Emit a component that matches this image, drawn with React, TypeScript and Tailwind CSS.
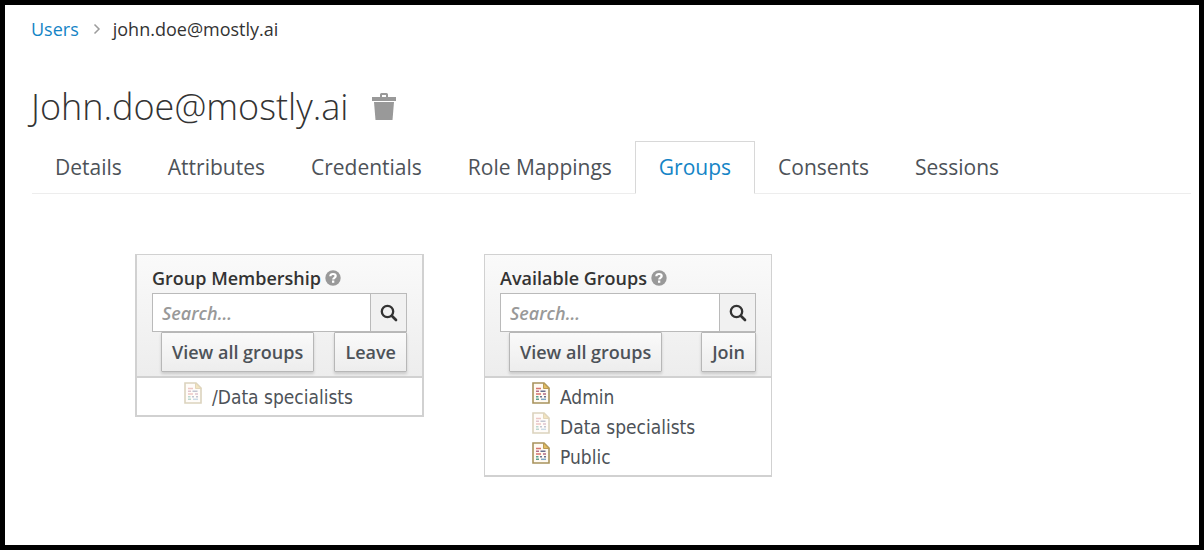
import React from "react";

type Item = { name: string; faded?: boolean };

const tabs = ["Details", "Attributes", "Credentials", "Role Mappings", "Groups", "Consents", "Sessions"];

function SearchIcon() {
  return (
    <svg aria-hidden="true" viewBox="0 0 18 18" className="size-[18px]" fill="none" stroke="#333" strokeLinecap="round">
      <circle cx="7.5" cy="7.5" r="5.7" strokeWidth="2.3" />
      <path d="M12 12l4 4" strokeWidth="2.7" />
    </svg>
  );
}

function HelpIcon() {
  return (
    <svg aria-hidden="true" viewBox="0 0 16 16" className="size-4">
      <circle cx="8" cy="8" r="7.7" fill="#999" />
      <path d="M5.3 6.2C5.4 4.7 6.5 4 8 4c1.500 0 2.700.7 2.700 2.100 0 1.700-2.500 1.700-2.500 3.300" fill="none" stroke="#fff" strokeWidth="2.200" />
      <rect x="7" y="10.500" width="2.300" height="2.300" fill="#fff" />
    </svg>
  );
}

function TrashIcon() {
  return (
    <svg aria-hidden="true" viewBox="0 0 24 28" className="h-7 w-6" fill="#999">
      <path d="M0 4h8V1.500Q8 0 9.500 0h5Q16 0 16 1.500V4h8v4H0zM10 2v2h4V2z" fillRule="evenodd" />
      <path d="M2 9h20l-1.500 18h-17z" />
    </svg>
  );
}

function DocIcon({ faded }: { faded?: boolean }) {
  return (
    <svg aria-hidden="true" viewBox="0 0 18 22" className={faded ? "h-[22px] w-[18px] shrink-0 opacity-40" : "h-[22px] w-[18px] shrink-0"}>
      <path d="M1 1h11l5 5v15H1z" fill="#fffaf2" stroke="#a8935c" strokeWidth="1.600" />
      <path d="M11.500 1v5.500H17z" fill="#e3bd62" stroke="#b99a52" strokeWidth="1" />
      <g strokeWidth="1.500">
        <path d="M4 6.500h5M4 12h5" stroke="#d8746c" />
        <path d="M4 9.300h3M11 12h3" stroke="#b06a86" />
        <path d="M8.500 9.300h5M8 14.700h2M12 14.700h2" stroke="#6b6f8f" />
        <path d="M4 14.700h2.500M4 17.300h3" stroke="#5aa08c" />
        <path d="M9 17.300h5" stroke="#7fa6c4" />
      </g>
    </svg>
  );
}

const button =
  "h-10 cursor-pointer rounded-[1px] border border-[#b7b7b7] bg-linear-to-b from-[#fafafa] to-[#ededed] px-[10px] text-lg font-semibold text-[#4d5258] shadow-[0_2px_3px_rgba(3,3,3,0.15)]";

function GroupPanel({ id, title, action, items, framed }: { id: string; title: string; action: string; items: Item[]; framed?: boolean }) {
  return (
    <section className={framed ? "w-[289px] border-x-2 border-t border-b-2 border-[#d1d1d1]" : "w-72 border-x border-t border-b-2 border-[#d1d1d1]"}>
      <div className="border-b-2 border-[#d1d1d1] bg-linear-to-b from-[#fafafa] to-[#ededed] px-[15px] pt-2 pb-1">
        <div className="flex h-[30px] items-center gap-1">
          <label htmlFor={id} className="text-lg font-semibold text-[#333]">{title}</label>
          <HelpIcon />
        </div>
        <div className="flex h-[39px]">
          <input
            id={id}
            type="text"
            placeholder="Search..."
            className="min-w-0 flex-1 border border-[#bababa] bg-white px-[9px] text-lg font-semibold italic text-[#333] outline-none placeholder:text-[#999]"
          />
          <button type="button" aria-label="Search" className="flex w-9 cursor-pointer items-center justify-center border border-l-0 border-[#bababa] bg-[#f1f1f1]">
            <SearchIcon />
          </button>
        </div>
        <div className="flex justify-between pl-[9px]">
          <button type="button" className={button}>View all groups</button>
          <button type="button" className={button}>{action}</button>
        </div>
      </div>
      <ul className="pt-1 pb-[3px] pl-[47px]">
        {items.map((item) => (
          <li key={item.name} className="flex h-[30px] gap-[10px]">
            <DocIcon faded={item.faded} />
            <span className="font-['DejaVu_Sans_Condensed','Noto_Sans',sans-serif] text-[19px] leading-[30px] text-[#4d5258]">{item.name}</span>
          </li>
        ))}
      </ul>
    </section>
  );
}

export default function App() {
  return (
    <div className="min-h-screen border-[5px] border-black bg-white font-['Open_Sans',sans-serif]">
      <main className="pt-3 pr-2 pl-[26px]">
        <nav aria-label="Breadcrumb">
          <ol className="flex items-center text-lg leading-6">
            <li><a href="#users" className="text-[#1484c6]">Users</a></li>
            <li aria-hidden="true" className="mr-3 ml-[14px]">
              <svg viewBox="0 0 8 12" className="h-3 w-2" fill="none" stroke="#9c9c9c" strokeWidth="1.500"><path d="M1.500 1.500L6 6l-4.500 4.500" /></svg>
            </li>
            <li className="text-[#333]">john.doe@mostly.ai</li>
          </ol>
        </nav>
        <div className="mt-[41px] flex h-[50px] items-center gap-6">
          <h1 className="text-4xl font-light text-[#333]">John.doe@mostly.ai</h1>
          <button type="button" aria-label="Delete user" className="cursor-pointer"><TrashIcon /></button>
        </div>
        <nav aria-label="User sections" className="mt-[9px] ml-px border-b border-[#ededed]">
          <ul className="-mb-px flex">
            {tabs.map((tab) => (
              <li key={tab}>
                <a
                  href="#tab"
                  className={
                    tab === "Groups"
                      ? "block border border-b-white border-[#d8d8d8] bg-white px-[23px] pt-[11px] pb-3 text-[21px] leading-7 text-[#1484c6]"
                      : "block border border-transparent px-[22px] pt-[11px] pb-3 text-[21px] leading-7 text-[#4d5258]"
                  }
                >
                  {tab}
                </a>
              </li>
            ))}
          </ul>
        </nav>
        <div className="mt-[60px] flex items-start gap-[60px] pl-[104px]">
          <GroupPanel id="membership-search" title="Group Membership" action="Leave" items={[{ name: "/Data specialists", faded: true }]} framed />
          <GroupPanel id="available-search" title="Available Groups" action="Join" items={[{ name: "Admin" }, { name: "Data specialists", faded: true }, { name: "Public" }]} />
        </div>
      </main>
    </div>
  );
}
